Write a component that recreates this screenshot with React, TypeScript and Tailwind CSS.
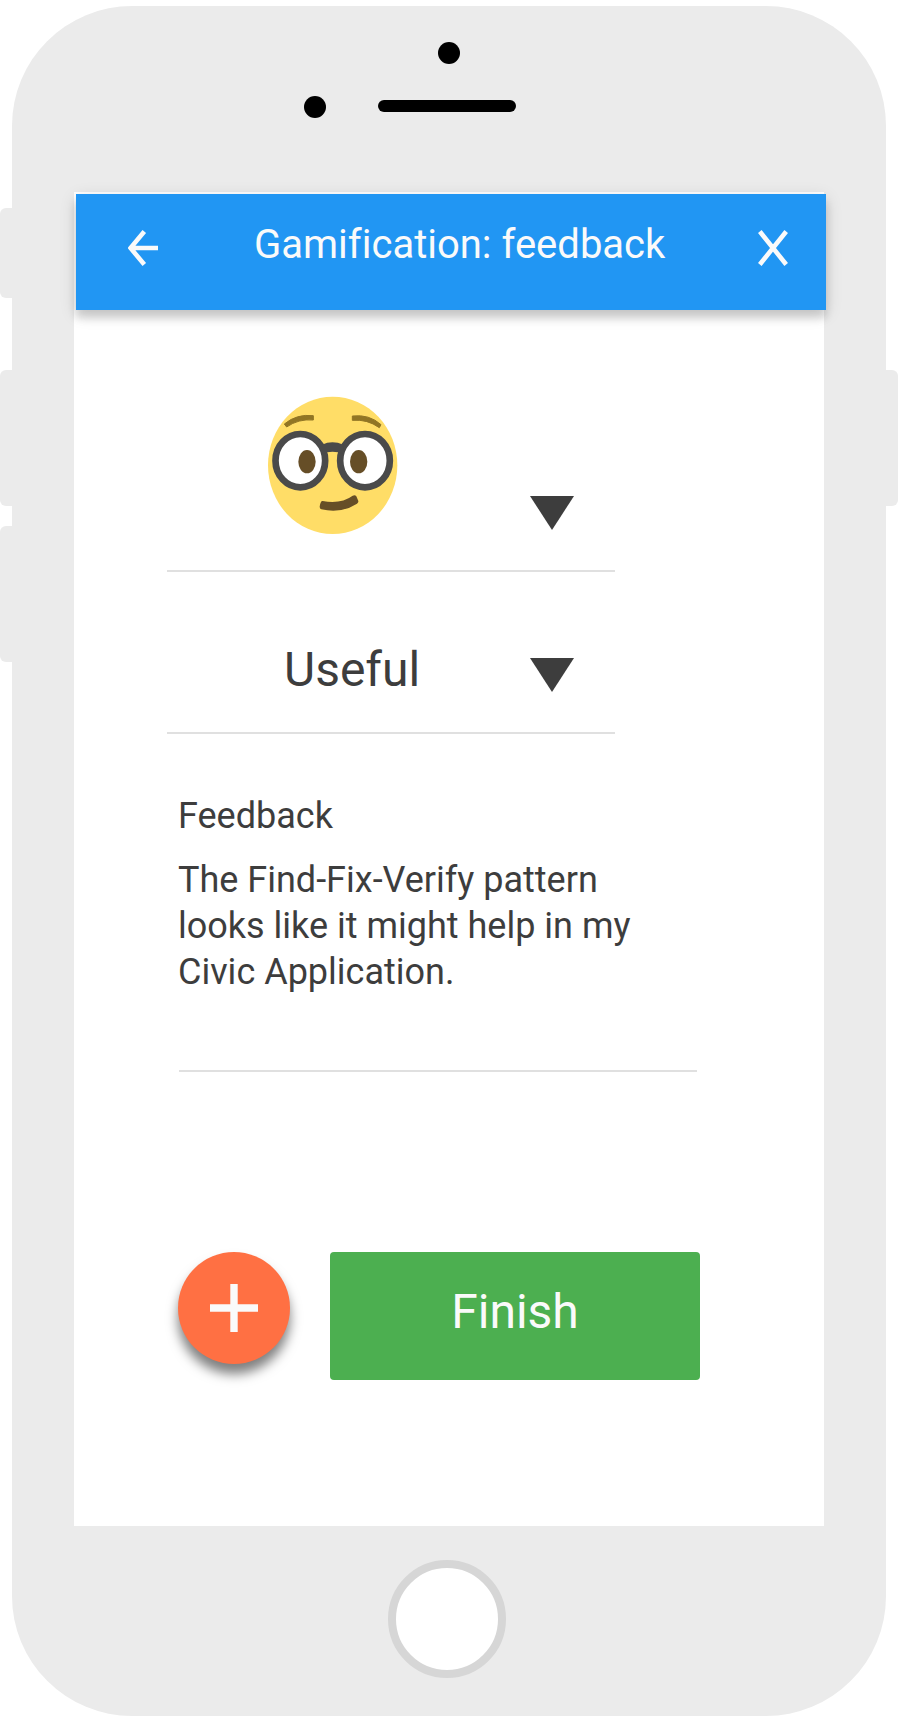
import React from "react";

function SideButton({ className }: { className: string }) {
  return <div className={`w-3 bg-[#ebebeb] ${className}`} />;
}

function ArrowDown() {
  return (
    <svg className="block h-[34px] w-11" viewBox="0 0 44 34" fill="#3d3d3d" aria-hidden="true">
      <path d="M0 0h44L22 34z" />
    </svg>
  );
}

function NerdFace() {
  return (
    <svg className="block h-[138px] w-[130px]" viewBox="54 48 390 414" fill="none" aria-hidden="true">
      <ellipse cx="248" cy="256" rx="194" ry="206" fill="#ffdd67" />
      <g fill="#917524" stroke="#917524" strokeWidth="3" strokeLinejoin="round">
        <path d="M103 132Q140 101 190 107V120Q145 116 110 141z" />
        <path d="M307 108Q358 102 393 134L388 143Q352 117 307 121z" />
      </g>
      <g fill="#fff" stroke="#4a4a4a" strokeWidth="20">
        <ellipse cx="151" cy="242" rx="74.5" ry="80" />
        <ellipse cx="345" cy="242" rx="74.5" ry="80" />
      </g>
      <path d="M216 194Q247 180 280 194V221Q247 209 216 221z" fill="#4a4a4a" />
      <ellipse cx="171" cy="245" rx="26" ry="35" fill="#664e27" />
      <ellipse cx="326" cy="245" rx="26" ry="35" fill="#664e27" />
      <path
        d="M218 363Q273 373 308 347Q315 343 319 349L325 363Q326 367 321 371Q273 402 214 388Q209 386 209 380Q210 371 213 366Q215 362 218 363z"
        fill="#664e27"
      />
    </svg>
  );
}

function Header() {
  return (
    <header className="relative ml-0.5 flex h-[116px] w-[750px] shrink-0 items-start bg-[#2196f3] pt-[26px] text-[#fafafa] shadow-[0_8px_8px_rgba(0,0,0,0.14),0_4px_16px_rgba(0,0,0,0.14)]">
      <button className="ml-[52px] mt-2.5 shrink-0" aria-label="Back">
        <svg className="block h-9 w-[30px]" viewBox="0 0 30 36" fill="none" stroke="currentColor" strokeWidth="4.6">
          <path d="M30 18H4M16.3 1.5L2.5 18L16.3 34.5" />
        </svg>
      </button>
      <h1 className="ml-24 mt-px w-[413px] shrink-0 whitespace-nowrap text-[40px] leading-[48px] [font-variant-ligatures:none]">
        Gamification: feedback
      </h1>
      <button className="ml-[91px] mt-2.5 shrink-0" aria-label="Close">
        <svg className="block h-9 w-[30px]" viewBox="0 0 30 36" fill="none" stroke="currentColor" strokeWidth="4.6">
          <path d="M1.8 1.5L28.2 34.5M28.2 1.5L1.8 34.5" />
        </svg>
      </button>
    </header>
  );
}

function Screen() {
  return (
    <main className="mt-[74px] flex h-[1334px] w-[750px] shrink-0 flex-col bg-white pt-0.5 text-[#3d3d3d]">
      <Header />
      <div className="ml-[93px] flex h-[262px] w-[448px] shrink-0 items-end border-b-2 border-[#e0e0e0] pl-[101px]">
        <div className="mb-9">
          <NerdFace />
        </div>
        <div className="mb-10 ml-[132px]">
          <ArrowDown />
        </div>
      </div>
      <div className="ml-[93px] flex h-[162px] w-[448px] shrink-0 items-start border-b-2 border-[#e0e0e0] pl-[117px]">
        <span className="mt-[70px] w-[246px] text-5xl leading-[56px]">Useful</span>
        <div className="mt-[86px]">
          <ArrowDown />
        </div>
      </div>
      <section className="ml-[105px] mt-[59px] h-[279px] w-[518px] shrink-0 border-b-2 border-[#e0e0e0] text-[36px] leading-[46px]">
        <h2 className="-ml-px">Feedback</h2>
        <p className="-ml-px mt-[18px] whitespace-nowrap">
          The Find-Fix-Verify pattern
          <br />
          looks like it might help in my
          <br />
          Civic Application.
        </p>
      </section>
      <div className="ml-[104px] mt-[180px] flex items-start gap-10 text-[#fafafa]">
        <button
          className="flex size-28 items-center justify-center rounded-full bg-[#ff7043] shadow-[0_10px_12px_rgba(0,0,0,0.5)]"
          aria-label="Add"
        >
          <svg className="block size-12" viewBox="0 0 48 48" fill="none" stroke="currentColor" strokeWidth="7.4">
            <path d="M24 0V48M0 24H48" />
          </svg>
        </button>
        <button className="flex h-32 w-[370px] items-start justify-center rounded bg-[#4caf50] pt-8 text-5xl leading-[56px]">
          Finish
        </button>
      </div>
    </main>
  );
}

export default function App() {
  return (
    <div className="flex h-[1724px] w-[900px] overflow-hidden bg-white pt-1.5 font-[Roboto,sans-serif]">
      <div className="flex w-3 shrink-0 flex-col pt-[202px]">
        <SideButton className="h-[90px] rounded-l-md" />
        <SideButton className="mt-[72px] h-[136px] rounded-l-md" />
        <SideButton className="mt-5 h-[136px] rounded-l-md" />
      </div>
      <div className="flex h-[1710px] w-[874px] shrink-0 flex-col rounded-[120px] bg-[#ebebeb] pl-[62px] pt-9">
        <div className="ml-[364px] size-[22px] shrink-0 rounded-full bg-black" />
        <div className="ml-[230px] mt-8 flex shrink-0 items-start gap-[52px]">
          <div className="size-[22px] rounded-full bg-black" />
          <div className="mt-1 h-3 w-[138px] rounded-full bg-black" />
        </div>
        <Screen />
        <div className="ml-[314px] mt-[34px] size-[118px] shrink-0 rounded-full border-8 border-[#d6d6d6] bg-white" />
      </div>
      <div className="w-3 shrink-0 pt-[364px]">
        <SideButton className="h-[136px] rounded-r-md" />
      </div>
    </div>
  );
}
